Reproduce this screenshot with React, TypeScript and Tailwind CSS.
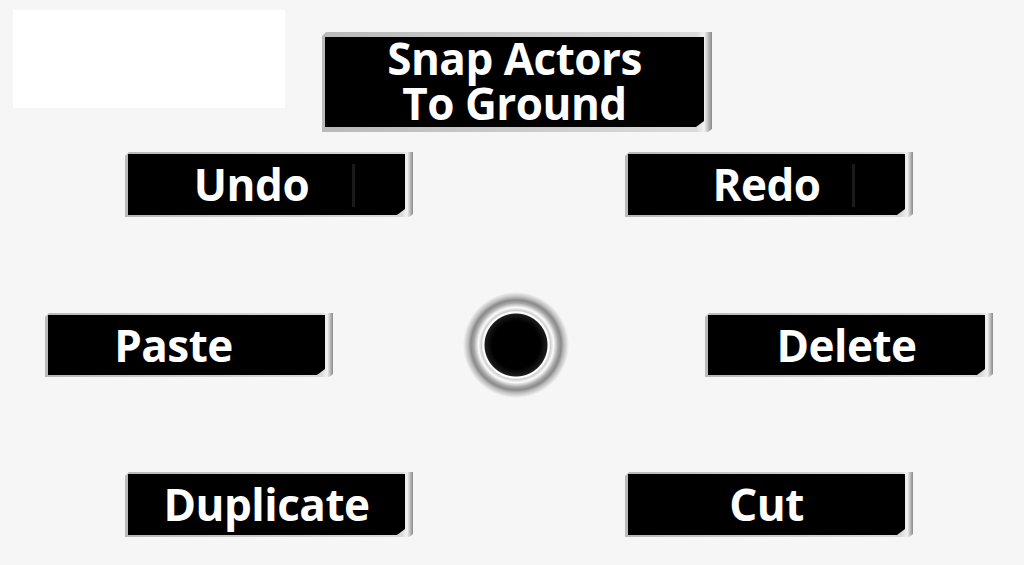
import React from "react";

function Btn({
  label,
  w,
  h,
  cls = "",
  textCls = "",
  line = false,
}: {
  label: React.ReactNode;
  w: string;
  h: string;
  cls?: string;
  textCls?: string;
  line?: boolean;
}) {
  return (
    <div
      className={`${w} ${h} ${cls} shrink-0 flex bg-[linear-gradient(90deg,#b9b9b9,#dadada_96%,#f2f2f2_98%,#8a8a8a)] pl-[3px] pr-[8px] py-[2px] [clip-path:polygon(4px_0,100%_0,100%_calc(100%-3px),calc(100%-4px)_100%,0_100%,0_4px)] shadow-[0_1px_2px_rgba(0,0,0,0.15)]`}
    >
      <div className="relative flex-1 bg-black flex items-center justify-center [clip-path:polygon(8px_0,100%_0,100%_calc(100%-6px),calc(100%-8px)_100%,0_100%,0_0)]">
        <span
          className={`text-white font-bold text-[44px] leading-[45px] tracking-[-0.5px] text-center ${textCls}`}
          style={{ fontFamily: '"Open Sans", "Liberation Sans", sans-serif' }}
        >
          {label}
        </span>
        {line && (
          <div className="absolute right-[50px] top-[10px] bottom-[8px] w-[3px] bg-[#1a1a1a]" />
        )}
      </div>
    </div>
  );
}

export default function App() {
  return (
    <div className="w-[1024px] h-[565px] bg-[#f6f6f6] overflow-hidden flex flex-col">
      <div className="flex items-start">
        <div className="mt-[10px] ml-[13px] w-[272px] h-[98px] bg-white shrink-0" />
        <Btn
          label={
            <>
              <span className="block leading-[45px]">Snap Actors</span>
              <span className="block leading-[45px]">To Ground</span>
            </>
          }
          w="w-[390px]"
          h="h-[100px]"
          cls="ml-[37px] mt-[32px] !py-[5px]"
          textCls="text-[42px] -mt-[3px]"
        />
      </div>
      <div className="flex mt-[20px]">
        <Btn label="Undo" w="w-[288px]" h="h-[65px]" cls="ml-[125px]" textCls="pr-[30px]" line />
        <Btn label="Redo" w="w-[288px]" h="h-[65px]" cls="ml-[212px]" line />
      </div>
      <div className="flex items-center mt-[73px]">
        <Btn label="Paste" w="w-[288px]" h="h-[64px]" cls="ml-[45px]" textCls="pr-[26px]" />
        <div className="ml-[128px] w-[110px] h-[110px] shrink-0 rounded-full bg-[radial-gradient(circle_closest-side,#000_0,#000_24px,#1c1c1c_31px,#ffffff_32px,#ffffff_33px,#cfcfcf_34.5px,#fbfbfb_37.5px,#a8a8a8_42px,#8a8a8a_45px,#bdbdbd_48px,#f6f6f6_53px)]" />
        <Btn label="Delete" w="w-[288px]" h="h-[64px]" cls="ml-[134px]" />
      </div>
      <div className="flex mt-[72px]">
        <Btn label="Duplicate" w="w-[288px]" h="h-[65px]" cls="ml-[125px]" />
        <Btn label="Cut" w="w-[288px]" h="h-[65px]" cls="ml-[212px]" />
      </div>
    </div>
  );
}
